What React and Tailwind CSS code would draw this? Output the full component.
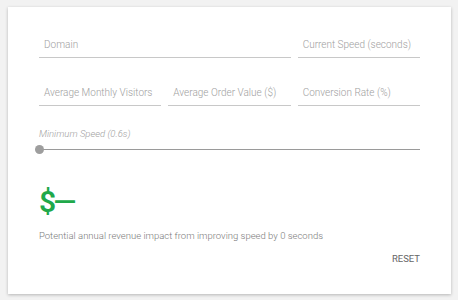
import React from "react";

function Field({ label, className = "" }) {
  return (
    <div className={`border-b border-[#c8c8c8] px-[5px] pb-[5px] ${className}`}>
      <div className="h-[14px] leading-[14px] text-[10px] font-light text-[#9e9e9e] whitespace-nowrap">{label}</div>
    </div>
  );
}

export default function App() {
  return (
    <div
      className="w-[458px] h-[300px] bg-[#f2f2f2] pt-[7px] pl-[8px]"
      style={{ fontFamily: "Roboto, 'Noto Sans', sans-serif" }}
    >
      <div className="w-[443px] h-[287px] bg-white shadow-[0_1px_3px_rgba(0,0,0,0.25)] px-[31px] pt-[31px]">
        <div className="grid grid-cols-3 gap-x-[7px] gap-y-[28px]">
          <Field label="Domain" className="col-span-2" />
          <Field label="Current Speed (seconds)" />
          <Field label="Average Monthly Visitors" />
          <Field label="Average Order Value ($)" />
          <Field label="Conversion Rate (%)" />
        </div>
        <div className="mt-[21px] h-[14px] leading-[14px] text-[9.5px] italic font-light text-[#9e9e9e]">
          Minimum Speed (0.6s)
        </div>
        <div className="relative mt-[4px] h-[9px] flex items-center">
          <div className="w-full h-[1.5px] bg-[#9a9a9a]" />
          <div className="absolute left-[-4px] top-0 w-[9px] h-[9px] rounded-full bg-[#9e9e9e]" />
        </div>
        <div className="mt-[33px] h-[30px] leading-[30px] text-[30px] font-semibold text-[#20a84a] flex">
          <span className="tracking-[-3px]">$</span>
          <span className="font-medium">—</span>
        </div>
        <div className="mt-[12px] h-[14px] leading-[14px] text-[9.5px] font-light text-[#7a7a7a]">
          Potential annual revenue impact from improving speed by 0 seconds
        </div>
        <div className="mt-[9px] flex justify-end">
          <div className="h-[14px] leading-[14px] text-[9.5px] text-[#666666]">RESET</div>
        </div>
      </div>
    </div>
  );
}
